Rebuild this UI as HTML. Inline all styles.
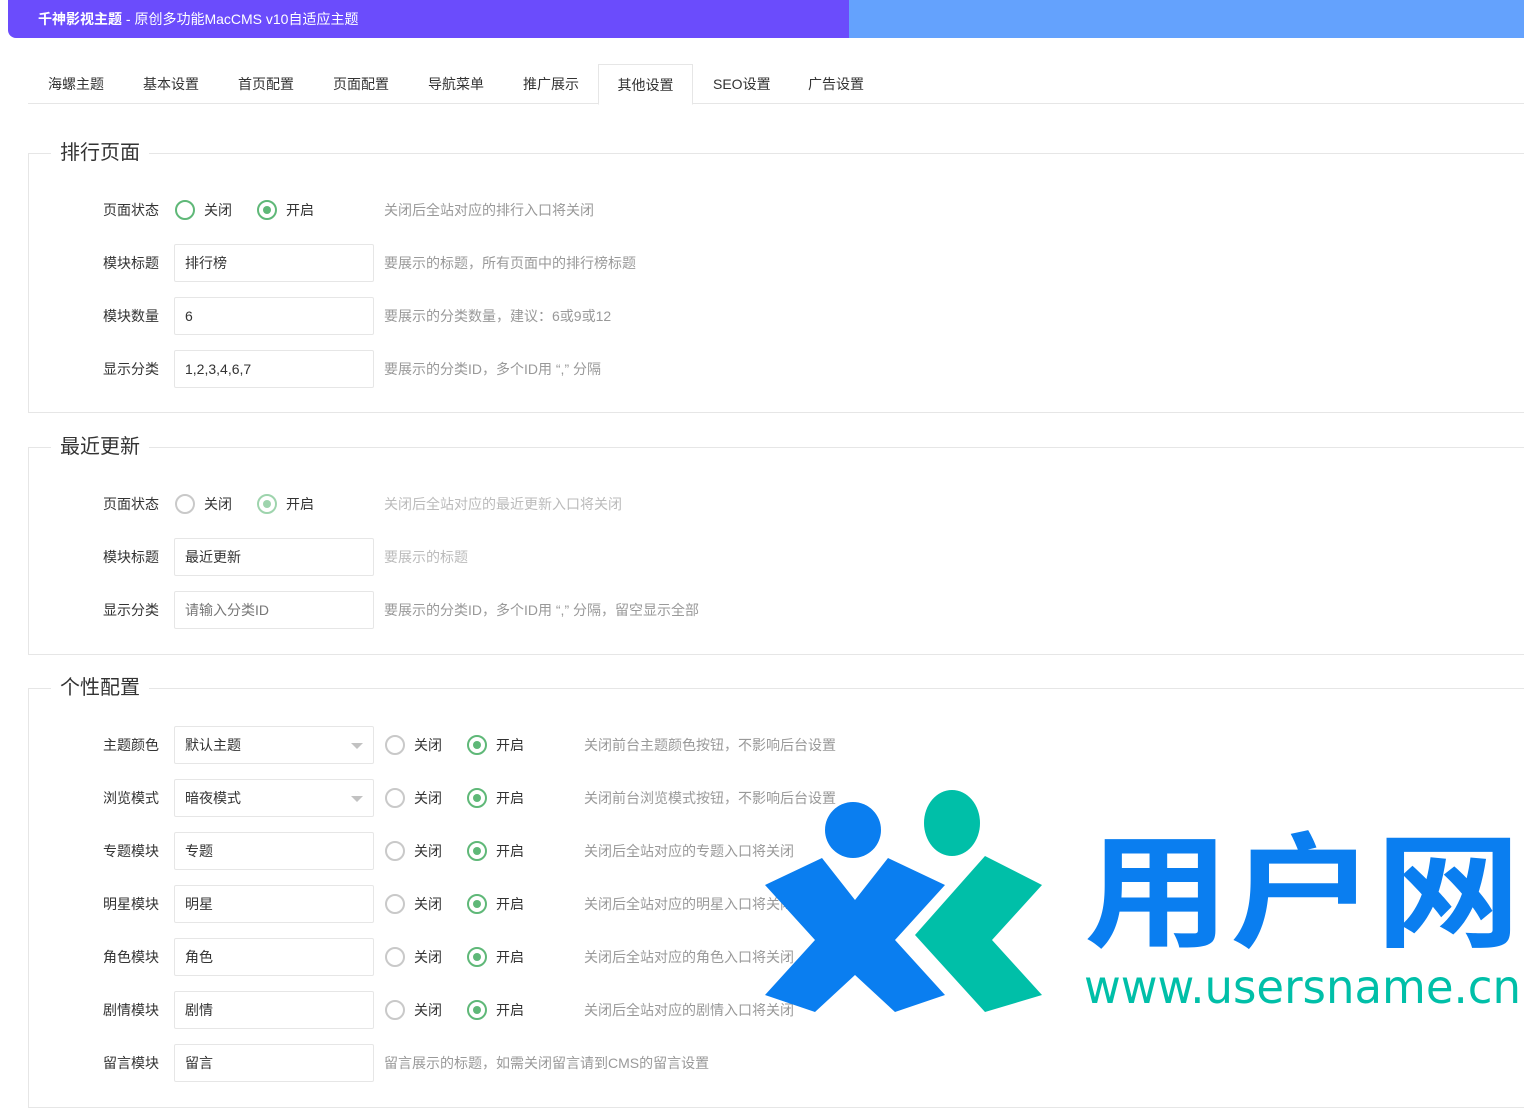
<!DOCTYPE html>
<html><head><meta charset="utf-8"><style>
*{box-sizing:border-box;margin:0;padding:0}
body{width:1524px;height:1089px;overflow:hidden;background:#fff;font-family:"Liberation Sans","Noto Sans CJK SC",sans-serif;font-size:14px;color:#333;position:relative}
.hdr{position:absolute;left:8px;top:0;width:842px;height:38px;background:#6b4cfc;border-radius:0 0 0 8px;color:#fff;font-size:14px;line-height:38px;padding-left:30px}
.hdr2{position:absolute;left:849px;top:0;width:675px;height:38px;background:#64a2fd}
.tabs{position:absolute;left:28px;top:64px;width:1496px;height:40px;border-bottom:1px solid #e6e6e6}
.tab{position:absolute;top:0;height:40px;line-height:40px;font-size:14px;color:#333}
.tab.on{border:1px solid #e6e6e6;border-bottom:1px solid #fff;background:#fff;width:95px;text-align:center;height:41px}
.fs{position:absolute;left:28px;width:1500px;border:1px solid #e6e6e6;border-right:none}
.lg{position:absolute;left:22px;top:-14px;background:#fff;padding:0 9px;font-size:20px;color:#333;line-height:26px}
.lab{position:absolute;width:131px;text-align:right;font-size:14px;line-height:20px}
.inp{position:absolute;left:174px;width:200px;height:38px;border:1px solid #e6e6e6;border-radius:2px;padding-left:10px;line-height:36px;font-size:14px;color:#333}
.ph{color:#777}
.tri{position:absolute;right:10px;top:16px;border:6px solid transparent;border-top:6px solid #c2c2c2;border-bottom:none}
.help{position:absolute;font-size:14px;color:#999;line-height:20px}
.r{position:absolute;width:20px;height:20px;border:2px solid #c9c9c9;border-radius:50%}
.r.g{border-color:#5fb878}
.r.on{border-color:#5fb878}
.r.on::after{content:"";position:absolute;left:4px;top:4px;width:8px;height:8px;border-radius:50%;background:#5fb878}
.rt{position:absolute;font-size:14px;line-height:20px}
</style></head><body>
<div class="hdr"><b>千神影视主题</b> - 原创多功能MacCMS v10自适应主题</div>
<div class="hdr2"></div>
<div class="tabs">
<div class="tab" style="left:20px">海螺主题</div>
<div class="tab" style="left:115px">基本设置</div>
<div class="tab" style="left:210px">首页配置</div>
<div class="tab" style="left:305px">页面配置</div>
<div class="tab" style="left:400px">导航菜单</div>
<div class="tab" style="left:495px">推广展示</div>
<div class="tab on" style="left:570px">其他设置</div>
<div class="tab" style="left:685px">SEO设置</div>
<div class="tab" style="left:780px">广告设置</div>
</div>

<div class="fs" style="top:153px;height:260px"><div class="lg">排行页面</div></div>
<div class="fs" style="top:447px;height:208px"><div class="lg">最近更新</div></div>
<div class="fs" style="top:688px;height:420px"><div class="lg">个性配置</div></div>

<div class="lab" style="left:28px;top:200px">页面状态</div>
<div class="r g" style="left:175px;top:200px"></div><div class="rt" style="left:204px;top:200px">关闭</div>
<div class="r on" style="left:257px;top:200px"></div><div class="rt" style="left:286px;top:200px">开启</div>
<div class="help" style="left:384px;top:200px">关闭后全站对应的排行入口将关闭</div>
<div class="lab" style="left:28px;top:253px">模块标题</div><div class="inp" style="top:244px">排行榜</div><div class="help" style="left:384px;top:253px">要展示的标题，所有页面中的排行榜标题</div>
<div class="lab" style="left:28px;top:306px">模块数量</div><div class="inp" style="top:297px">6</div><div class="help" style="left:384px;top:306px">要展示的分类数量，建议：6或9或12</div>
<div class="lab" style="left:28px;top:359px">显示分类</div><div class="inp" style="top:350px">1,2,3,4,6,7</div><div class="help" style="left:384px;top:359px">要展示的分类ID，多个ID用 “,” 分隔</div>

<div class="lab" style="left:28px;top:494px">页面状态</div>
<div class="r" style="left:175px;top:494px"></div><div class="rt" style="left:204px;top:494px">关闭</div>
<div class="r on" style="left:257px;top:494px;opacity:.6"></div><div class="rt" style="left:286px;top:494px">开启</div>
<div class="help" style="left:384px;top:494px;color:#bbb">关闭后全站对应的最近更新入口将关闭</div>
<div class="lab" style="left:28px;top:547px">模块标题</div><div class="inp" style="top:538px">最近更新</div><div class="help" style="left:384px;top:547px;color:#bbb">要展示的标题</div>
<div class="lab" style="left:28px;top:600px">显示分类</div><div class="inp ph" style="top:591px">请输入分类ID</div><div class="help" style="left:384px;top:600px">要展示的分类ID，多个ID用 “,” 分隔，留空显示全部</div>

<div class="lab" style="left:28px;top:735px">主题颜色</div><div class="inp" style="top:726px">默认主题<span class="tri"></span></div>
<div class="lab" style="left:28px;top:788px">浏览模式</div><div class="inp" style="top:779px">暗夜模式<span class="tri"></span></div>
<div class="lab" style="left:28px;top:841px">专题模块</div><div class="inp" style="top:832px">专题</div>
<div class="lab" style="left:28px;top:894px">明星模块</div><div class="inp" style="top:885px">明星</div>
<div class="lab" style="left:28px;top:947px">角色模块</div><div class="inp" style="top:938px">角色</div>
<div class="lab" style="left:28px;top:1000px">剧情模块</div><div class="inp" style="top:991px">剧情</div>
<div class="lab" style="left:28px;top:1053px">留言模块</div><div class="inp" style="top:1044px">留言</div>
<div class="help" style="left:384px;top:1053px">留言展示的标题，如需关闭留言请到CMS的留言设置</div>

<div class="r" style="left:385px;top:735px"></div><div class="rt" style="left:414px;top:735px">关闭</div><div class="r on" style="left:467px;top:735px"></div><div class="rt" style="left:496px;top:735px">开启</div>
<div class="r" style="left:385px;top:788px"></div><div class="rt" style="left:414px;top:788px">关闭</div><div class="r on" style="left:467px;top:788px"></div><div class="rt" style="left:496px;top:788px">开启</div>
<div class="r" style="left:385px;top:841px"></div><div class="rt" style="left:414px;top:841px">关闭</div><div class="r on" style="left:467px;top:841px"></div><div class="rt" style="left:496px;top:841px">开启</div>
<div class="r" style="left:385px;top:894px"></div><div class="rt" style="left:414px;top:894px">关闭</div><div class="r on" style="left:467px;top:894px"></div><div class="rt" style="left:496px;top:894px">开启</div>
<div class="r" style="left:385px;top:947px"></div><div class="rt" style="left:414px;top:947px">关闭</div><div class="r on" style="left:467px;top:947px"></div><div class="rt" style="left:496px;top:947px">开启</div>
<div class="r" style="left:385px;top:1000px"></div><div class="rt" style="left:414px;top:1000px">关闭</div><div class="r on" style="left:467px;top:1000px"></div><div class="rt" style="left:496px;top:1000px">开启</div>
<div class="help" style="left:584px;top:735px">关闭前台主题颜色按钮，不影响后台设置</div>
<div class="help" style="left:584px;top:788px">关闭前台浏览模式按钮，不影响后台设置</div>
<div class="help" style="left:584px;top:841px">关闭后全站对应的专题入口将关闭</div>
<div class="help" style="left:584px;top:894px">关闭后全站对应的明星入口将关闭</div>
<div class="help" style="left:584px;top:947px">关闭后全站对应的角色入口将关闭</div>
<div class="help" style="left:584px;top:1000px">关闭后全站对应的剧情入口将关闭</div>

<svg style="position:absolute;left:760px;top:790px" width="764" height="240" viewBox="0 0 764 240">
<ellipse cx="93" cy="40" rx="28" ry="28" fill="#0a7ef0"/>
<ellipse cx="192" cy="33" rx="28" ry="33" fill="#00bfa8"/>
<path d="M5 95 L62 68 L95 110 L128 68 L185 95 L135 150 L185 205 L135 222 L95 185 L55 222 L5 205 L55 150 Z" fill="#0a7ef0"/>
<path d="M155 145 L225 66 L282 95 L232 150 L282 205 L225 222 Z" fill="#00bfa8"/>
<text x="324" y="147" font-family="Noto Sans CJK SC,sans-serif" font-weight="700" font-size="125" fill="#0a7ef0" textLength="437" lengthAdjust="spacingAndGlyphs">用户网</text>
<text x="324" y="213" font-family="DejaVu Sans,sans-serif" font-size="46" fill="#00bfa8" textLength="437" lengthAdjust="spacingAndGlyphs">www.usersname.cn</text>
</svg>
</body></html>
